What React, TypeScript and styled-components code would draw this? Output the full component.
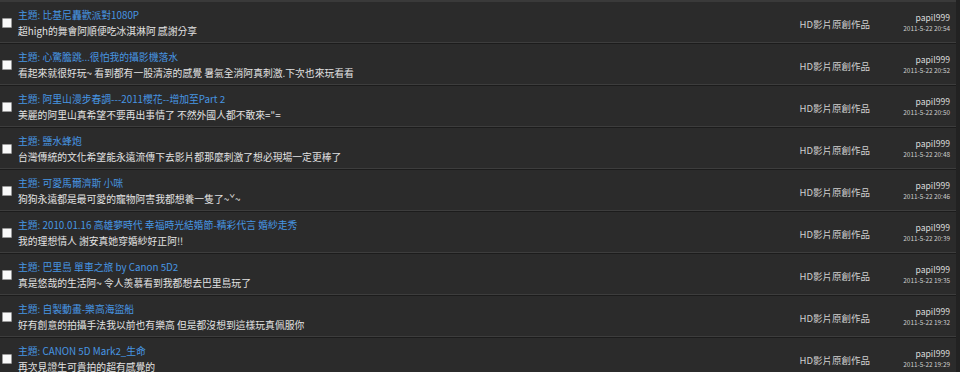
import styled, { createGlobalStyle } from "styled-components";

const GlobalStyle = createGlobalStyle`
  html, body {
    margin: 0;
    padding: 0;
    background: #222222;
  }
  body {
    font-family: "Noto Sans CJK TC", "Liberation Sans", sans-serif;
  }
`;

const Page = styled.div`
  width: 960px;
  height: 372px;
  overflow: hidden;
  background: #222222;
  display: flex;
`;

const List = styled.div`
  width: 956px;
  background: #2b2b2b;
  border-top: 2px solid #3a3a3a;
  display: flex;
  flex-direction: column;
`;

const Row = styled.div`
  display: grid;
  grid-template-columns: 18px 1fr 120px 86px;
  align-items: center;
  height: 42px;
  box-sizing: border-box;
  border-bottom: 1px solid #1c1c1c;
  box-shadow: inset 0 -1px 0 #3d3d3d;
  flex-shrink: 0;
`;

const Check = styled.input.attrs({ type: "checkbox" })`
  appearance: none;
  margin: 1px 0 0 2px;
  width: 10px;
  height: 10px;
  box-sizing: border-box;
  background: #fafafa;
  border: 1px solid #9a9a9a;
  border-radius: 1px;
`;

const Subject = styled.div`
  display: flex;
  flex-direction: column;
  padding-top: 1px;
  min-width: 0;
`;

const Title = styled.a`
  font-size: 9.8px;
  line-height: 15px;
  color: #4796e3;
  text-decoration: none;
  white-space: nowrap;
`;

const Body = styled.div`
  font-size: 9.8px;
  line-height: 16px;
  color: #e2e2e2;
  white-space: nowrap;
`;

const Forum = styled.div`
  font-size: 9.5px;
  color: #d0d0d0;
  text-align: right;
  padding-top: 3px;
`;

const Author = styled.div`
  display: flex;
  flex-direction: column;
  align-items: flex-end;
  padding-right: 6px;
`;

const Name = styled.span`
  font-size: 8.6px;
  line-height: 11px;
  color: #dadada;
  padding-bottom: 1px;
`;

const Stamp = styled.span`
  font-size: 6.4px;
  line-height: 9px;
  color: #cfcfcf;
`;

type Topic = { title: string; body: string; time: string };

const topics: Topic[] = [
  { title: "比基尼轟歡派對1080P", body: "超high的舞會阿順便吃冰淇淋阿 感謝分享", time: "2011-5-22 20:54" },
  { title: "心驚膽跳...很怕我的攝影機落水", body: "看起來就很好玩~ 看到都有一股清涼的感覺 暑氣全消阿真刺激.下次也來玩看看", time: "2011-5-22 20:52" },
  { title: "阿里山漫步春調---2011櫻花--增加至Part 2", body: "美麗的阿里山真希望不要再出事情了 不然外國人都不敢來=\"=", time: "2011-5-22 20:50" },
  { title: "鹽水蜂炮", body: "台灣傳統的文化希望能永遠流傳下去影片都那麼刺激了想必現場一定更棒了", time: "2011-5-22 20:48" },
  { title: "可愛馬爾濟斯 小咪", body: "狗狗永遠都是最可愛的寵物阿害我都想養一隻了~ˇ~", time: "2011-5-22 20:46" },
  { title: "2010.01.16 高雄夢時代 幸福時光結婚節-精彩代言 婚紗走秀", body: "我的理想情人 謝安真她穿婚紗好正阿!!", time: "2011-5-22 20:39" },
  { title: "巴里島 單車之旅 by Canon 5D2", body: "真是悠哉的生活阿~ 令人羨慕看到我都想去巴里島玩了", time: "2011-5-22 19:35" },
  { title: "自製動畫-樂高海盜船", body: "好有創意的拍攝手法我以前也有樂高 但是都沒想到這樣玩真佩服你", time: "2011-5-22 19:32" },
  { title: "CANON 5D Mark2_生命", body: "再次見證生可貴拍的超有感覺的", time: "2011-5-22 19:29" },
];

export default function App() {
  return (
    <>
      <GlobalStyle />
      <Page>
        <List>
          {topics.map((t) => (
            <Row key={t.time}>
              <Check />
              <Subject>
                <Title href="#">主題: {t.title}</Title>
                <Body>{t.body}</Body>
              </Subject>
              <Forum>HD影片原創作品</Forum>
              <Author>
                <Name>papil999</Name>
                <Stamp>{t.time}</Stamp>
              </Author>
            </Row>
          ))}
        </List>
      </Page>
    </>
  );
}
